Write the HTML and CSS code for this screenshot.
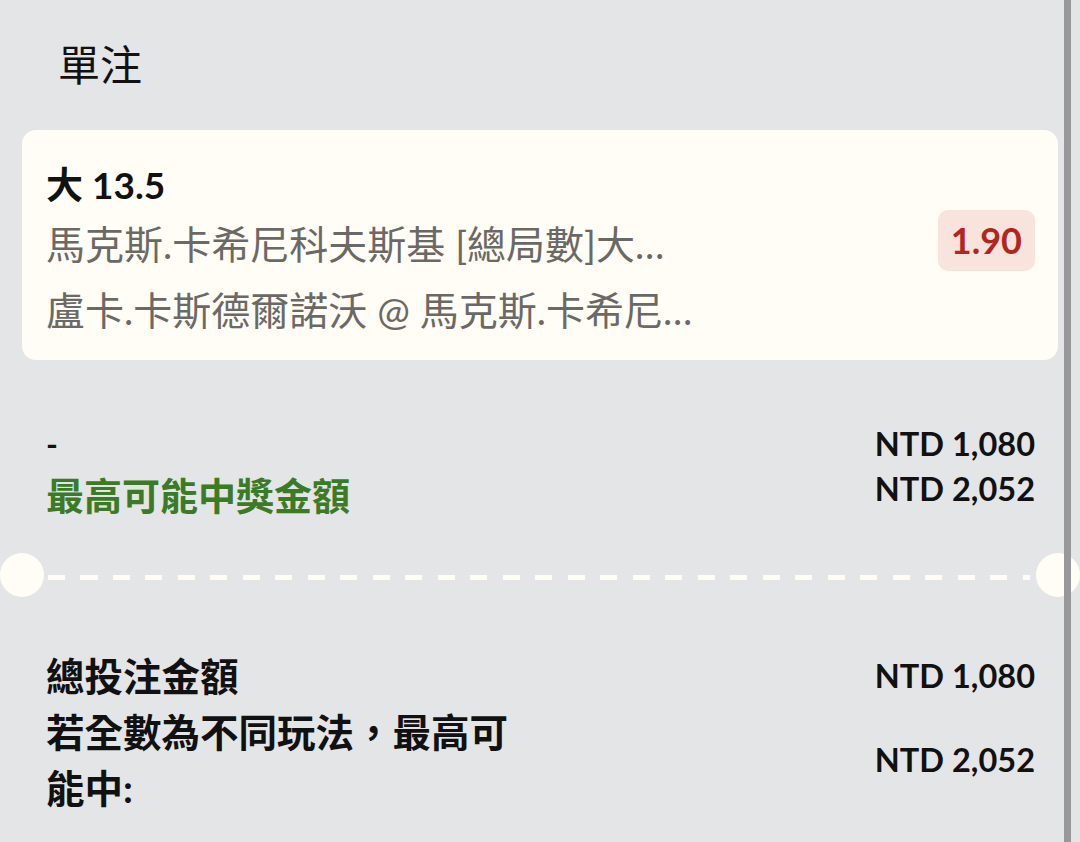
FILE: index.html
```html
<!DOCTYPE html>
<html lang="zh-Hant">
<head>
<meta charset="utf-8">
<title>單注</title>
<link rel="stylesheet" href="styles.css">
</head>
<body>
<div class="sheet">
  <div class="title">單注</div>

  <div class="card">
    <div class="card-info">
      <div class="pick">大 13.5</div>
      <div class="meta">馬克斯.卡希尼科夫斯基 [總局數]大…</div>
      <div class="meta">盧卡.卡斯德爾諾沃 @ 馬克斯.卡希尼…</div>
    </div>
    <div class="odds">1.90</div>
  </div>

  <div class="summary">
    <div class="summary-labels">
      <div class="dash-label">-</div>
      <div class="win-label">最高可能中獎金額</div>
    </div>
    <div class="summary-values">
      <div class="amount">NTD 1,080</div>
      <div class="amount">NTD 2,052</div>
    </div>
  </div>

  <div class="divider">
    <span class="notch"></span>
    <span class="dashes"></span>
    <span class="notch"></span>
  </div>

  <div class="totals">
    <div class="total-row">
      <div class="total-label">總投注金額</div>
      <div class="total-value">NTD 1,080</div>
    </div>
    <div class="total-row">
      <div class="total-label">若全數為不同玩法，最高可能中:</div>
      <div class="total-value">NTD 2,052</div>
    </div>
  </div>

  <div class="scrollbar"></div>
</div>
</body>
</html>
```

FILE: styles.css
```css
* { box-sizing: border-box; }

html, body {
  margin: 0;
  padding: 0;
}

body {
  background: #e4e5e7;
  font-family: Lato, "Noto Sans CJK TC", sans-serif;
  color: #111111;
}

.sheet {
  position: relative;
  width: 1080px;
  height: 842px;
  overflow: hidden;
}

.title {
  padding: 35px 0 0 58px;
  font-size: 42px;
  line-height: 60px;
  font-weight: 400;
  color: #111111;
}

.card {
  margin: 35px 22px 0 22px;
  height: 230px;
  padding: 35px 23px 17px 24px;
  background: #fffdf5;
  border-radius: 14px;
  display: flex;
  justify-content: space-between;
  align-items: flex-start;
}

.pick {
  font-size: 37px;
  line-height: 40px;
  font-weight: 700;
  color: #111111;
  margin-bottom: 6px;
}

.meta {
  font-size: 39px;
  line-height: 66px;
  color: #6b6966;
  white-space: nowrap;
}

.odds {
  margin-top: 45px;
  padding: 8px 13px;
  font-size: 36px;
  line-height: 45px;
  font-weight: 700;
  color: #b3261e;
  background: #f8e4dd;
  border-radius: 10px;
}

.summary {
  display: flex;
  justify-content: space-between;
  padding: 0 45px 0 46px;
  margin-top: 61px;
}

.dash-label {
  font-size: 32px;
  line-height: 45px;
  font-weight: 700;
}

.win-label {
  font-size: 38px;
  line-height: 58px;
  font-weight: 700;
  color: #3b7b25;
}

.amount {
  font-size: 32.5px;
  line-height: 45px;
  font-weight: 700;
  text-align: right;
}

.divider {
  display: flex;
  align-items: center;
  margin-top: 29px;
  height: 44px;
}

.notch {
  width: 44px;
  height: 44px;
  border-radius: 50%;
  background: #fffdf5;
  flex: none;
}

.dashes {
  flex: 1;
  height: 5px;
  margin: 4px 6px 0 4px;
  background: repeating-linear-gradient(to right, #fffdf3 0 17px, transparent 17px 32.5px);
}

.totals {
  margin-top: 51px;
  padding: 0 45px 0 46px;
}

.total-row {
  display: flex;
  justify-content: space-between;
  align-items: center;
}

.total-label {
  width: 480px;
  font-size: 38.5px;
  line-height: 56px;
  font-weight: 700;
}

.total-value {
  font-size: 32.5px;
  line-height: 56px;
  font-weight: 700;
  text-align: right;
}

.scrollbar {
  position: absolute;
  top: 0;
  bottom: 0;
  left: 1064px;
  width: 7px;
  background: #98989b;
}
```
